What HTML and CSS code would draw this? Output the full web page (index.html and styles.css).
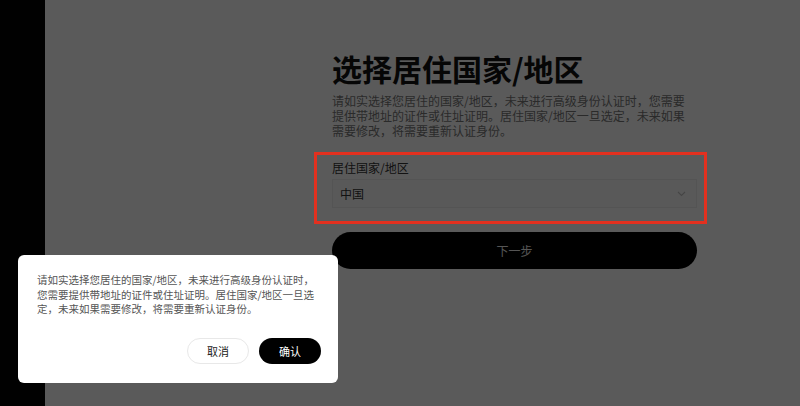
FILE: index.html
```html
<!DOCTYPE html>
<html>
<head>
    <meta charset="utf-8">
    <title>选择居住国家/地区</title>
    <link rel="stylesheet" href="styles.css">
</head>
<body>
    <div class="sidebar"></div>

    <div class="main">
        <div class="form">
            <h1>选择居住国家/地区</h1>
            <p class="intro">请如实选择您居住的国家/地区，未来进行高级身份认证时，您需要提供带地址的证件或住址证明。居住国家/地区一旦选定，未来如果需要修改，将需要重新认证身份。</p>

            <div class="field">
                <label class="field-label">居住国家/地区</label>
                <div class="select">
                    <span>中国</span>
                    <svg class="chevron" width="9" height="6" viewBox="0 0 9 6">
                        <path d="M1 1l3.5 3.5L8 1" fill="none" stroke="#c4c4c4" stroke-width="1.1"/>
                    </svg>
                </div>
            </div>

            <button class="next">下一步</button>
        </div>
    </div>

    <div class="mask"></div>

    <div class="dialog">
        <p class="dialog-text">请如实选择您居住的国家/地区，未来进行高级身份认证时，<br>您需要提供带地址的证件或住址证明。居住国家/地区一旦选<br>定，未来如果需要修改，将需要重新认证身份。</p>
        <div class="dialog-actions">
            <button class="btn btn-cancel">取消</button>
            <button class="btn btn-ok">确认</button>
        </div>
    </div>
</body>
</html>
```

FILE: styles.css
```css
html, body {
    height: 100%;
}

body {
    margin: 0;
    display: flex;
    font-family: "Noto Sans CJK SC", "Noto Sans", sans-serif;
    background-color: #ffffff;
    color: #1a1a1a;
    overflow: hidden;
}

.sidebar {
    width: 45px;
    flex-shrink: 0;
    background-color: #050505;
}

.main {
    flex: 1;
}

.form {
    width: 365px;
    margin-left: 287px;
    padding-top: 48px;
}

h1 {
    margin: 0;
    font-size: 30px;
    line-height: 40px;
    font-weight: 700;
    color: #111;
}

.intro {
    width: 358px;
    margin: 5px 0 0;
    font-size: 12px;
    line-height: 15px;
    color: #777;
}

.field {
    position: relative;
    margin-top: 22px;
}

/* red frame drawn round the country field */
.field::after {
    content: "";
    position: absolute;
    left: -18px;
    right: -10px;
    top: -8px;
    bottom: -16px;
    border: 3px solid #e3301f;
    z-index: 20;
}

.field-label {
    display: block;
    font-size: 12px;
    line-height: 16px;
    color: #333;
}

.select {
    display: flex;
    align-items: center;
    justify-content: space-between;
    height: 27px;
    margin-top: 3px;
    padding: 0 10px 0 7px;
    border: 1px solid #efefef;
    background-color: #fcfcfc;
    font-size: 12px;
    color: #333;
}

.next {
    display: block;
    width: 100%;
    height: 37px;
    margin-top: 24px;
    border: none;
    border-radius: 19px;
    background-color: #000;
    color: #f0f0f0;
    font-family: inherit;
    font-size: 12px;
}

.mask {
    position: fixed;
    inset: 0;
    background-color: rgba(0, 0, 0, 0.647);
    z-index: 10;
}

.dialog {
    position: fixed;
    left: 18px;
    top: 255px;
    width: 320px;
    height: 128px;
    box-sizing: border-box;
    padding: 18px 10px 19px 19px;
    display: flex;
    flex-direction: column;
    justify-content: space-between;
    background-color: #fff;
    border-radius: 6px;
    z-index: 30;
}

.dialog-text {
    margin: 0;
    font-size: 10.5px;
    line-height: 14.5px;
    white-space: nowrap;
    color: #555;
}

.dialog-actions {
    display: flex;
    justify-content: flex-end;
    gap: 10px;
    padding-right: 7px;
}

.btn {
    width: 62px;
    height: 26px;
    border-radius: 13px;
    font-family: inherit;
    font-size: 11px;
}

.btn-cancel {
    border: 1px solid #e8e8e8;
    background-color: #fff;
    color: #222;
}

.btn-ok {
    border: none;
    background-color: #000;
    color: #fff;
}
```
